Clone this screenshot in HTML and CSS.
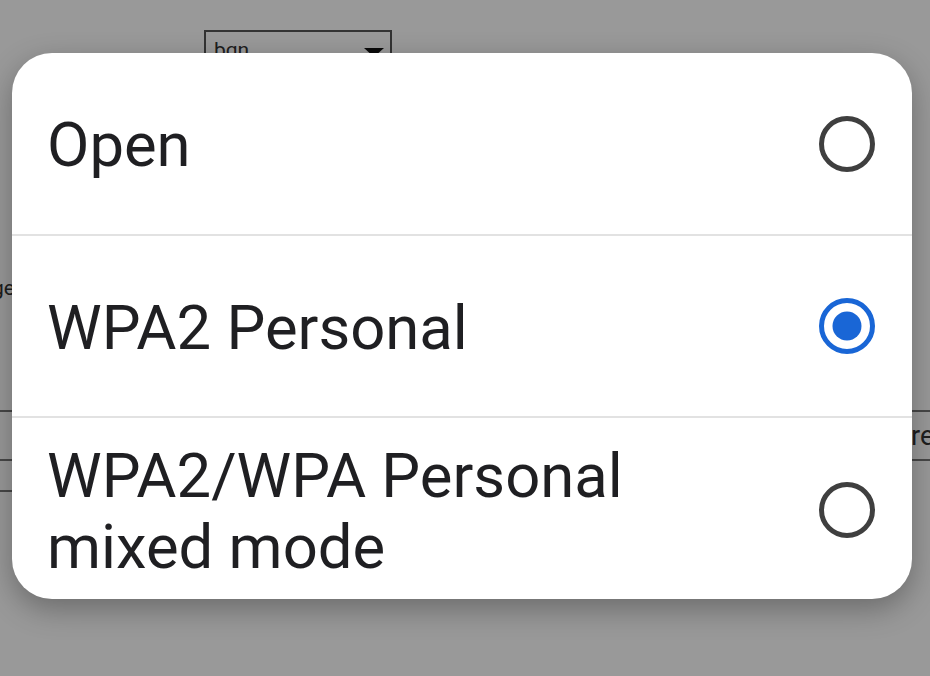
FILE: index.html
```html
<!DOCTYPE html>
<html>
<head>
<meta charset="utf-8">
<link rel="stylesheet" href="styles.css">
</head>
<body>
<div class="page">
  <div class="select"><span class="select-text">bgn</span><span class="caret"></span></div>
  <div class="label-row">ge</div>
  <div class="input-row"><span class="input-text">re</span></div>
  <div class="rule"></div>
</div>
<div class="overlay"></div>
<div class="dialog">
  <div class="option opt-1">
    <span class="opt-label">Open</span>
    <svg class="radio" viewBox="0 0 56 56" width="56" height="56"><circle cx="28" cy="28" r="25.5" fill="none" stroke="#3f3f3f" stroke-width="5"/></svg>
  </div>
  <div class="divider"></div>
  <div class="option opt-2">
    <span class="opt-label">WPA2 Personal</span>
    <svg class="radio" viewBox="0 0 56 56" width="56" height="56"><circle cx="28" cy="28" r="25.5" fill="none" stroke="#1966d6" stroke-width="5"/><circle cx="28" cy="28" r="14.5" fill="#1966d6"/></svg>
  </div>
  <div class="divider"></div>
  <div class="option opt-3">
    <span class="opt-label">WPA2/WPA Personal<br>mixed mode</span>
    <svg class="radio" viewBox="0 0 56 56" width="56" height="56"><circle cx="28" cy="28" r="25.5" fill="none" stroke="#3f3f3f" stroke-width="5"/></svg>
  </div>
</div>
</body>
</html>
```
FILE: styles.css
```css
html, body {
  margin: 0;
  padding: 0;
}
body {
  width: 930px;
  height: 676px;
  overflow: hidden;
  background: #ffffff;
  font-family: Roboto, "Noto Sans", sans-serif;
  position: relative;
}
.page {
  padding-top: 30px;
  color: #333;
  font-size: 21px;
}
.select {
  margin-left: 204px;
  height: 44px;
  border: 2px solid #555;
  display: flex;
  align-items: flex-start;
  justify-content: space-between;
  padding: 6px 6px 0 8px;
  box-sizing: border-box;
  width: 188px;
}
.caret {
  width: 0;
  height: 0;
  border-left: 10px solid transparent;
  border-right: 10px solid transparent;
  border-top: 9px solid #111;
  margin-top: 10px;
}
.label-row {
  margin-top: 202px;
  height: 24px;
  line-height: 24px;
  margin-left: -8px;
}
.input-row {
  margin-top: 110px;
  height: 47px;
  border-top: 2px solid #777;
  border-bottom: 2px solid #777;
  display: flex;
  align-items: center;
  font-size: 27px;
}
.input-text {
  margin-left: 911px;
}
.rule {
  margin-top: 29px;
  height: 2px;
  width: 40px;
  background: #777;
}
.overlay {
  position: absolute;
  inset: 0;
  background: rgba(0, 0, 0, 0.4);
}
.dialog {
  position: absolute;
  top: 53px;
  left: 12px;
  width: 900px;
  height: 546px;
  background: #fff;
  border-radius: 40px;
  overflow: hidden;
  box-shadow: 0 10px 30px rgba(0, 0, 0, 0.3);
}
.option {
  display: flex;
  align-items: center;
  justify-content: space-between;
  padding: 0 37px 0 35px;
  box-sizing: border-box;
}
.opt-1 { height: 181px; }
.opt-2 { height: 180px; }
.opt-3 { height: 184px; }
.opt-label {
  font-size: 61.6px;
  line-height: 71px;
  padding-top: 4px;
  color: #1f1f22;
}
.radio {
  flex: none;
  display: block;
}
.divider {
  height: 2px;
  background: #e2e2e2;
}
```
